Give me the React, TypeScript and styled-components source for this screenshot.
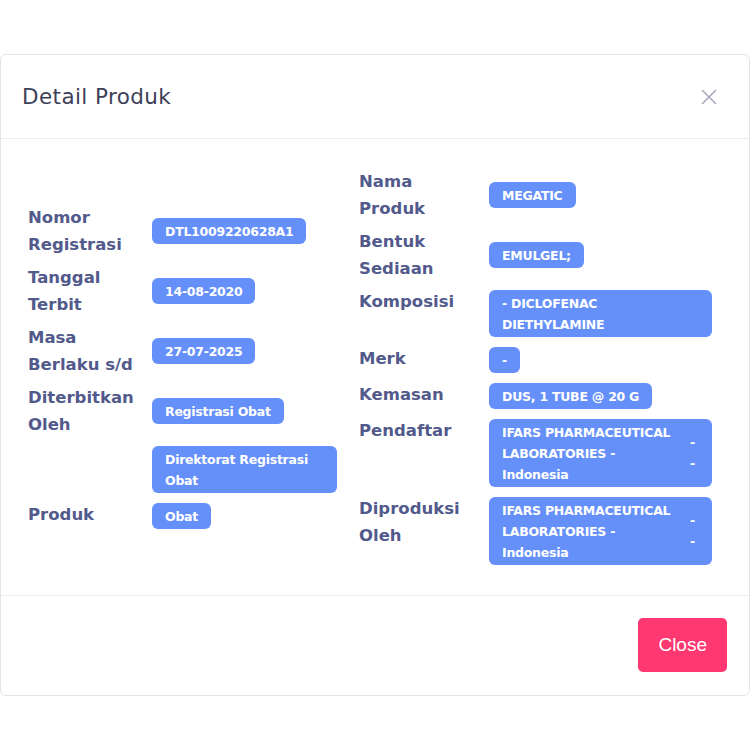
import React from "react";
import styled, { createGlobalStyle } from "styled-components";

interface Row {
  label: string;
  value?: string;
  extra?: boolean;
}

interface BadgeProps {
  $split?: boolean;
}

const GlobalStyle = createGlobalStyle`
  body {
    margin: 0;
    background: #ffffff;
    font-family: "DejaVu Sans", Inter, sans-serif;
  }
`;

const Modal = styled.div`
  box-sizing: border-box;
  width: 750px;
  margin-top: 54px;
  border: 1px solid #e4e4e8;
  border-radius: 6px;
  background: #ffffff;
`;

const Header = styled.div`
  height: 83px;
  display: flex;
  align-items: center;
  justify-content: space-between;
  padding: 0 30px 0 21px;
  border-bottom: 1px solid #ebebf0;
`;

const Title = styled.h5`
  margin: 0;
  font-size: 21.5px;
  font-weight: 400;
  color: #3e4057;
  letter-spacing: 0.4px;
`;

const CloseIcon = styled.button`
  border: none;
  background: none;
  padding: 0;
  width: 20px;
  height: 20px;
  display: flex;
  align-items: center;
  justify-content: center;
  cursor: pointer;
`;

const Body = styled.div`
  display: flex;
  align-items: center;
  gap: 22px;
  padding: 29px 38px 28px 27px;
  border-bottom: 1px solid #ebebf0;
`;

const Grid = styled.div<{ $label: number; $value: number }>`
  display: grid;
  grid-template-columns: ${({ $label }) => $label}px ${({ $value }) => $value}px;
  row-gap: 6px;
  align-items: start;
`;

const Label = styled.div`
  padding-right: 12px;
  font-size: 16.5px;
  line-height: 27px;
  font-weight: 700;
  color: #525a8c;
`;

const Value = styled.div`
  align-self: center;
`;

const Badge = styled.span<BadgeProps>`
  box-sizing: border-box;
  display: ${({ $split }) => ($split ? "flex" : "inline-block")};
  align-items: center;
  justify-content: space-between;
  gap: 10px;
  margin: 2px 0;
  padding: 2.5px 13px;
  border-radius: 6px;
  background: #6690f9;
  color: #ffffff;
  font-size: 12.5px;
  line-height: 21px;
  font-weight: 700;
  letter-spacing: -0.25px;
`;

const Dashes = styled.span`
  display: flex;
  flex-direction: column;
  padding-right: 4px;
`;

const Footer = styled.div`
  display: flex;
  justify-content: flex-end;
  padding: 22px 22px 23px;
`;

const CloseButton = styled.button`
  height: 54px;
  padding: 0 20px;
  border: none;
  border-radius: 5px;
  background: #ff3871;
  color: #ffffff;
  font-family: "Liberation Sans", Arial, sans-serif;
  font-size: 19px;
  cursor: pointer;
`;

const leftRows: Row[] = [
  { label: "Nomor Registrasi", value: "DTL1009220628A1" },
  { label: "Tanggal Terbit", value: "14-08-2020" },
  { label: "Masa Berlaku s/d", value: "27-07-2025" },
  { label: "Diterbitkan Oleh", value: "Registrasi Obat" },
  { label: "", value: "Direktorat Registrasi Obat" },
  { label: "Produk", value: "Obat" },
];

const rightRows: Row[] = [
  { label: "Nama Produk", value: "MEGATIC" },
  { label: "Bentuk Sediaan", value: "EMULGEL;" },
  { label: "Komposisi", value: "- DICLOFENAC DIETHYLAMINE" },
  { label: "Merk", value: "-" },
  { label: "Kemasan", value: "DUS, 1 TUBE @ 20 G" },
  { label: "Pendaftar", value: "IFARS PHARMACEUTICAL LABORATORIES - Indonesia", extra: true },
  { label: "Diproduksi Oleh", value: "IFARS PHARMACEUTICAL LABORATORIES - Indonesia", extra: true },
];

const renderRows = (rows: Row[]) =>
  rows.map((row, i) => (
    <React.Fragment key={i}>
      <Label>{row.label}</Label>
      <Value>
        {row.extra ? (
          <Badge $split>
            <span>{row.value}</span>
            <Dashes>
              <span>-</span>
              <span>-</span>
            </Dashes>
          </Badge>
        ) : (
          <Badge>{row.value}</Badge>
        )}
      </Value>
    </React.Fragment>
  ));

const App = (): JSX.Element => {
  return (
    <>
      <GlobalStyle />
      <Modal>
        <Header>
          <Title>Detail Produk</Title>
          <CloseIcon aria-label="close">
            <svg width="16" height="16" viewBox="0 0 16 16">
              <path d="M1.5 1.5l13 13M14.5 1.5l-13 13" stroke="#a7a9ba" strokeWidth="1.6" strokeLinecap="round" />
            </svg>
          </CloseIcon>
        </Header>
        <Body>
          <Grid $label={124} $value={185}>{renderRows(leftRows)}</Grid>
          <Grid $label={130} $value={223}>{renderRows(rightRows)}</Grid>
        </Body>
        <Footer>
          <CloseButton>Close</CloseButton>
        </Footer>
      </Modal>
    </>
  );
};

export default App;
